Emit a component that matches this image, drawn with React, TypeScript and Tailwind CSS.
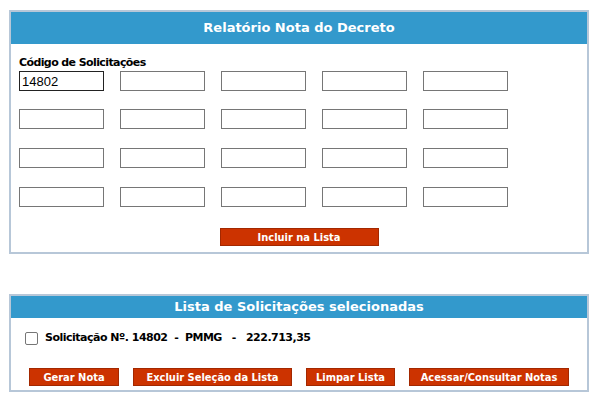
const verdana = "font-['Verdana','DejaVu_Sans',sans-serif]";

function RedButton({ label, width }: { label: string; width: string }) {
  return (
    <button
      type="button"
      className={`${width} h-[18px] bg-[#cc3300] border border-[#a32800] text-white text-[11px] font-bold leading-none font-['Tahoma','DejaVu_Sans_Condensed','DejaVu_Sans',sans-serif]`}
    >
      {label}
    </button>
  );
}

function Panel({ title, headerH, children }: { title: string; headerH: string; children: React.ReactNode }) {
  return (
    <div className="border-2 border-[#b7c7d8] bg-white">
      <div className={`${headerH} bg-[#3399cc] flex items-center justify-center text-white text-[13px] font-bold ${verdana}`}>
        {title}
      </div>
      {children}
    </div>
  );
}

// margem de cima de cada linha de campos (a primeira fica colada no rótulo)
const rowGaps = ["mt-[1px]", "mt-[18px]", "mt-[19px]", "mt-[19px]"];

export default function App() {
  const cols = [0, 1, 2, 3, 4];

  return (
    <div className="w-[605px] h-[404px] bg-white pl-[9px] pt-[10px] pr-[16px]">
      <Panel title="Relatório Nota do Decreto" headerH="h-[32px]">
        <div className="pl-[8px] pt-[12px] pb-[6px]">
          <div className={`text-[11px] font-bold text-black leading-[14px] tracking-[-0.6px] ${verdana}`}>
            Código de Solicitações
          </div>
          {rowGaps.map((gap, r) => (
            <div key={r} className={`flex gap-[16px] ${gap}`}>
              {cols.map((c) => {
                const first = r === 0 && c === 0;
                return (
                  <input
                    key={c}
                    type="text"
                    defaultValue={first ? "14802" : ""}
                    className={`w-[85px] h-[20px] px-[2px] text-[13px] text-black bg-white font-['Liberation_Sans',Arial,sans-serif] outline-none border ${
                      first ? "border-[#222]" : "border-[#767676]"
                    }`}
                  />
                );
              })}
            </div>
          ))}
          <div className="flex justify-center mt-[21px] pr-[8px]">
            <RedButton label="Incluir na Lista" width="w-[159px]" />
          </div>
        </div>
      </Panel>

      <div className="mt-[40px]">
        <Panel title="Lista de Solicitações selecionadas" headerH="h-[22px]">
          <div className="pt-[13px] pb-[4px]">
            <div className="flex items-center pl-[14px] gap-[7px]">
              <span className="w-[13px] h-[13px] border border-[#767676] rounded-[2px] bg-white" />
              <span className={`text-[11px] font-bold text-black whitespace-pre leading-[14px] tracking-[-0.5px] ${verdana}`}>
                {"Solicitação Nº. 14802  -  PMMG   -   222.713,35"}
              </span>
            </div>
            <div className="flex justify-center gap-[14px] mt-[23px]">
              <RedButton label="Gerar Nota" width="w-[90px]" />
              <RedButton label="Excluir Seleção da Lista" width="w-[159px]" />
              <RedButton label="Limpar Lista" width="w-[89px]" />
              <RedButton label="Acessar/Consultar Notas" width="w-[160px]" />
            </div>
          </div>
        </Panel>
      </div>
    </div>
  );
}
